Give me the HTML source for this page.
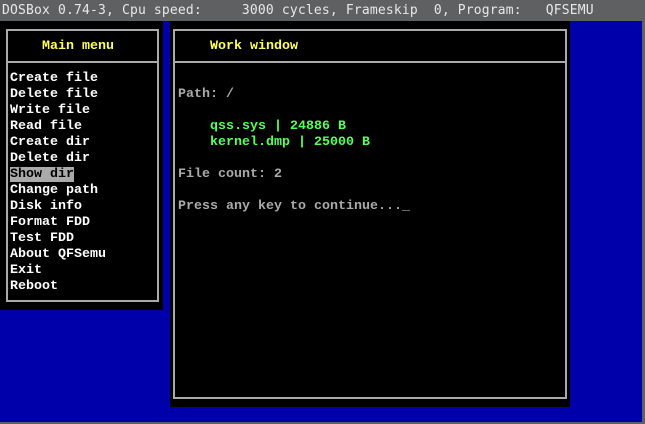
<!DOCTYPE html>
<html><head><style>
*{margin:0;padding:0}
body{width:645px;height:424px;background:#5f6062;position:relative;overflow:hidden;font-family:"Liberation Mono","DejaVu Sans Mono",monospace;}
.t{position:absolute;left:2px;top:3px;color:#e8e8e8;white-space:pre;font-family:"DejaVu Sans Mono","Liberation Mono",monospace;font-size:13px;letter-spacing:0.17px}
.blue{position:absolute;left:0;top:21px;width:642px;height:401px;background:#0000aa}
.blk{position:absolute;background:#000}
.bd{position:absolute;border:2px solid #aaa;box-sizing:border-box}
.hr{position:absolute;height:2px;background:#aaa}
.tx{position:absolute;font-size:13.33px;line-height:16px;white-space:pre;font-weight:bold}
.y{color:#ffff55}.w{color:#fff}.g{color:#aaa}.gr{color:#55ff55}
.hl{background:#aaa;color:#000}
</style></head><body>
<div class="t">DOSBox 0.74-3, Cpu speed:     3000 cycles, Frameskip  0, Program:   QFSEMU</div>
<div class="blue"></div>
<div class="blk" style="left:0;top:21px;width:163px;height:289px"></div>
<div class="bd" style="left:6px;top:29px;width:153px;height:273px"></div>
<div class="hr" style="left:6px;top:61px;width:153px"></div>
<div class="tx y" style="left:42px;top:39px">Main menu</div>
<div class="tx w" style="left:10px;top:71px">Create file
Delete file
Write file
Read file
Create dir
Delete dir
<span class="hl">Show dir</span>
Change path
Disk info
Format FDD
Test FDD
About QFSemu
Exit
Reboot</div>
<div class="blk" style="left:170px;top:21px;width:400px;height:386px"></div>
<div class="bd" style="left:173px;top:29px;width:394px;height:370px"></div>
<div class="hr" style="left:173px;top:61px;width:394px"></div>
<div class="tx y" style="left:210px;top:39px">Work window</div>
<div class="tx g" style="left:178px;top:87px">Path: /</div>
<div class="tx gr" style="left:210px;top:119px">qss.sys | 24886 B
kernel.dmp | 25000 B</div>
<div class="tx g" style="left:178px;top:167px">File count: 2</div>
<div class="tx g" style="left:178px;top:199px">Press any key to continue..._</div>
</body></html>
